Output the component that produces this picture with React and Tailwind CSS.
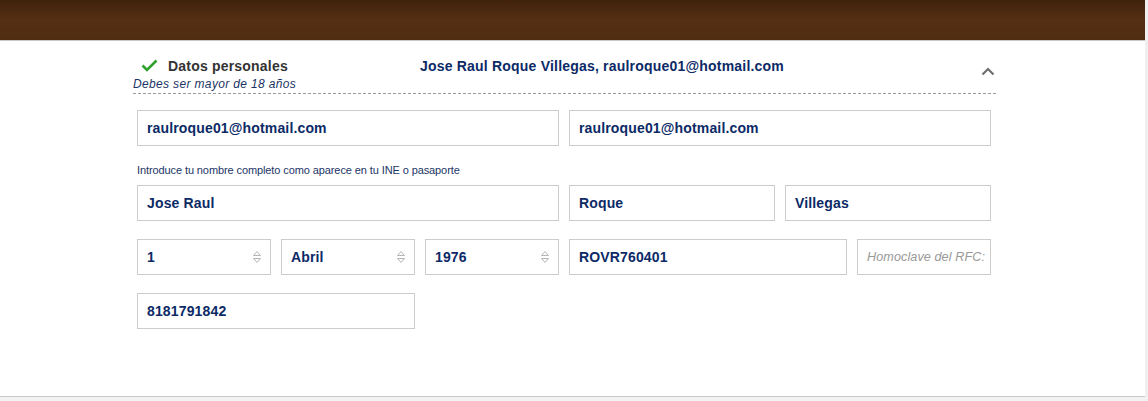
import React from 'react'

const font = { fontFamily: '"Liberation Sans", Arial, sans-serif' }

function SortIcon() {
  return (
    <svg width="10" height="14" viewBox="0 0 10 14" className="shrink-0">
      <path d="M1.5 5.5 L5 1.5 L8.5 5.5 Z" fill="none" stroke="#b5b5b5" strokeWidth="1" />
      <path d="M1.5 8.5 L5 12.5 L8.5 8.5 Z" fill="none" stroke="#b5b5b5" strokeWidth="1" />
    </svg>
  )
}

function Field({ value, span, select, placeholder }) {
  return (
    <div
      className={`${span} h-[36px] border border-[#cccccc] bg-white flex items-center justify-between overflow-hidden ${placeholder ? 'pl-[9px] pr-0' : 'pl-[9px] pr-[8px]'}`}
    >
      {placeholder ? (
        <span className="text-[12.6px] italic text-[#999999] whitespace-nowrap tracking-[0.1px]">{placeholder}</span>
      ) : (
        <span className="text-[14px] font-bold text-[#0c2a66] tracking-[0.15px]">{value}</span>
      )}
      {select && <SortIcon />}
    </div>
  )
}

export default function App() {
  return (
    <div className="w-[1148px] h-[401px] bg-[#f3f3f3] flex overflow-hidden" style={font}>
      <div className="flex-1 flex flex-col">
        {/* top bar */}
        <div className="h-[41px] bg-gradient-to-b from-[#3f220c] via-[#552f13] to-[#502c11] border-b border-[#c9c9c9]" />

        <div className="h-[356px] bg-white border-b border-[#c8c8c8]">
          <div className="w-[864px] ml-[132px]">
            {/* header */}
            <div className="h-[53px] pt-[16px] flex items-start relative border-b border-dashed border-[#9a9a9a] ml-[1px]">
              <div className="w-[287px]">
                <div className="flex items-center h-[18px]">
                  <svg width="17" height="13" viewBox="0 0 17 13" className="ml-[8px] mt-[-1px]">
                    <path d="M1.5 6.5 L6 11 L15.5 1.5" fill="none" stroke="#2ea12e" strokeWidth="2.6" />
                  </svg>
                  <span className="ml-[10px] text-[14px] font-bold text-[#333333] tracking-[0.2px]">Datos personales</span>
                </div>
                <div className="mt-[2px] text-[12px] italic text-[#1c3566] leading-[15px] tracking-[0.35px]">
                  Debes ser mayor de 18 años
                </div>
              </div>
              <div className="text-[14px] font-bold text-[#0c2a66] h-[18px] flex items-center tracking-[0.2px]">
                Jose Raul Roque Villegas, raulroque01@hotmail.com
              </div>
              <svg width="14" height="9" viewBox="0 0 14 9" className="absolute right-[1px] top-[26px]">
                <path d="M1.5 7.5 L7 2 L12.5 7.5" fill="none" stroke="#707070" strokeWidth="2.2" />
              </svg>
            </div>

            {/* form */}
            <div className="px-[5px] pt-[16px]">
              <div className="grid grid-cols-12 gap-x-[10px]">
                <Field span="col-span-6" value="raulroque01@hotmail.com" />
                <Field span="col-span-6" value="raulroque01@hotmail.com" />
              </div>
              <div className="mt-[18px] text-[11px] text-[#1c3566] leading-[13px] tracking-[-0.1px]">
                Introduce tu nombre completo como aparece en tu INE o pasaporte
              </div>
              <div className="mt-[8px] grid grid-cols-12 gap-x-[10px] gap-y-[18px]">
                <Field span="col-span-6" value="Jose Raul" />
                <Field span="col-span-3" value="Roque" />
                <Field span="col-span-3" value="Villegas" />
                <Field span="col-span-2" value="1" select />
                <Field span="col-span-2" value="Abril" select />
                <Field span="col-span-2" value="1976" select />
                <Field span="col-span-4" value="ROVR760401" />
                <Field span="col-span-2" placeholder="Homoclave del RFC:" />
                <Field span="col-span-4" value="8181791842" />
              </div>
            </div>
          </div>
        </div>
      </div>
      <div className="w-[3px] bg-[#f0f0f0]" />
    </div>
  )
}
